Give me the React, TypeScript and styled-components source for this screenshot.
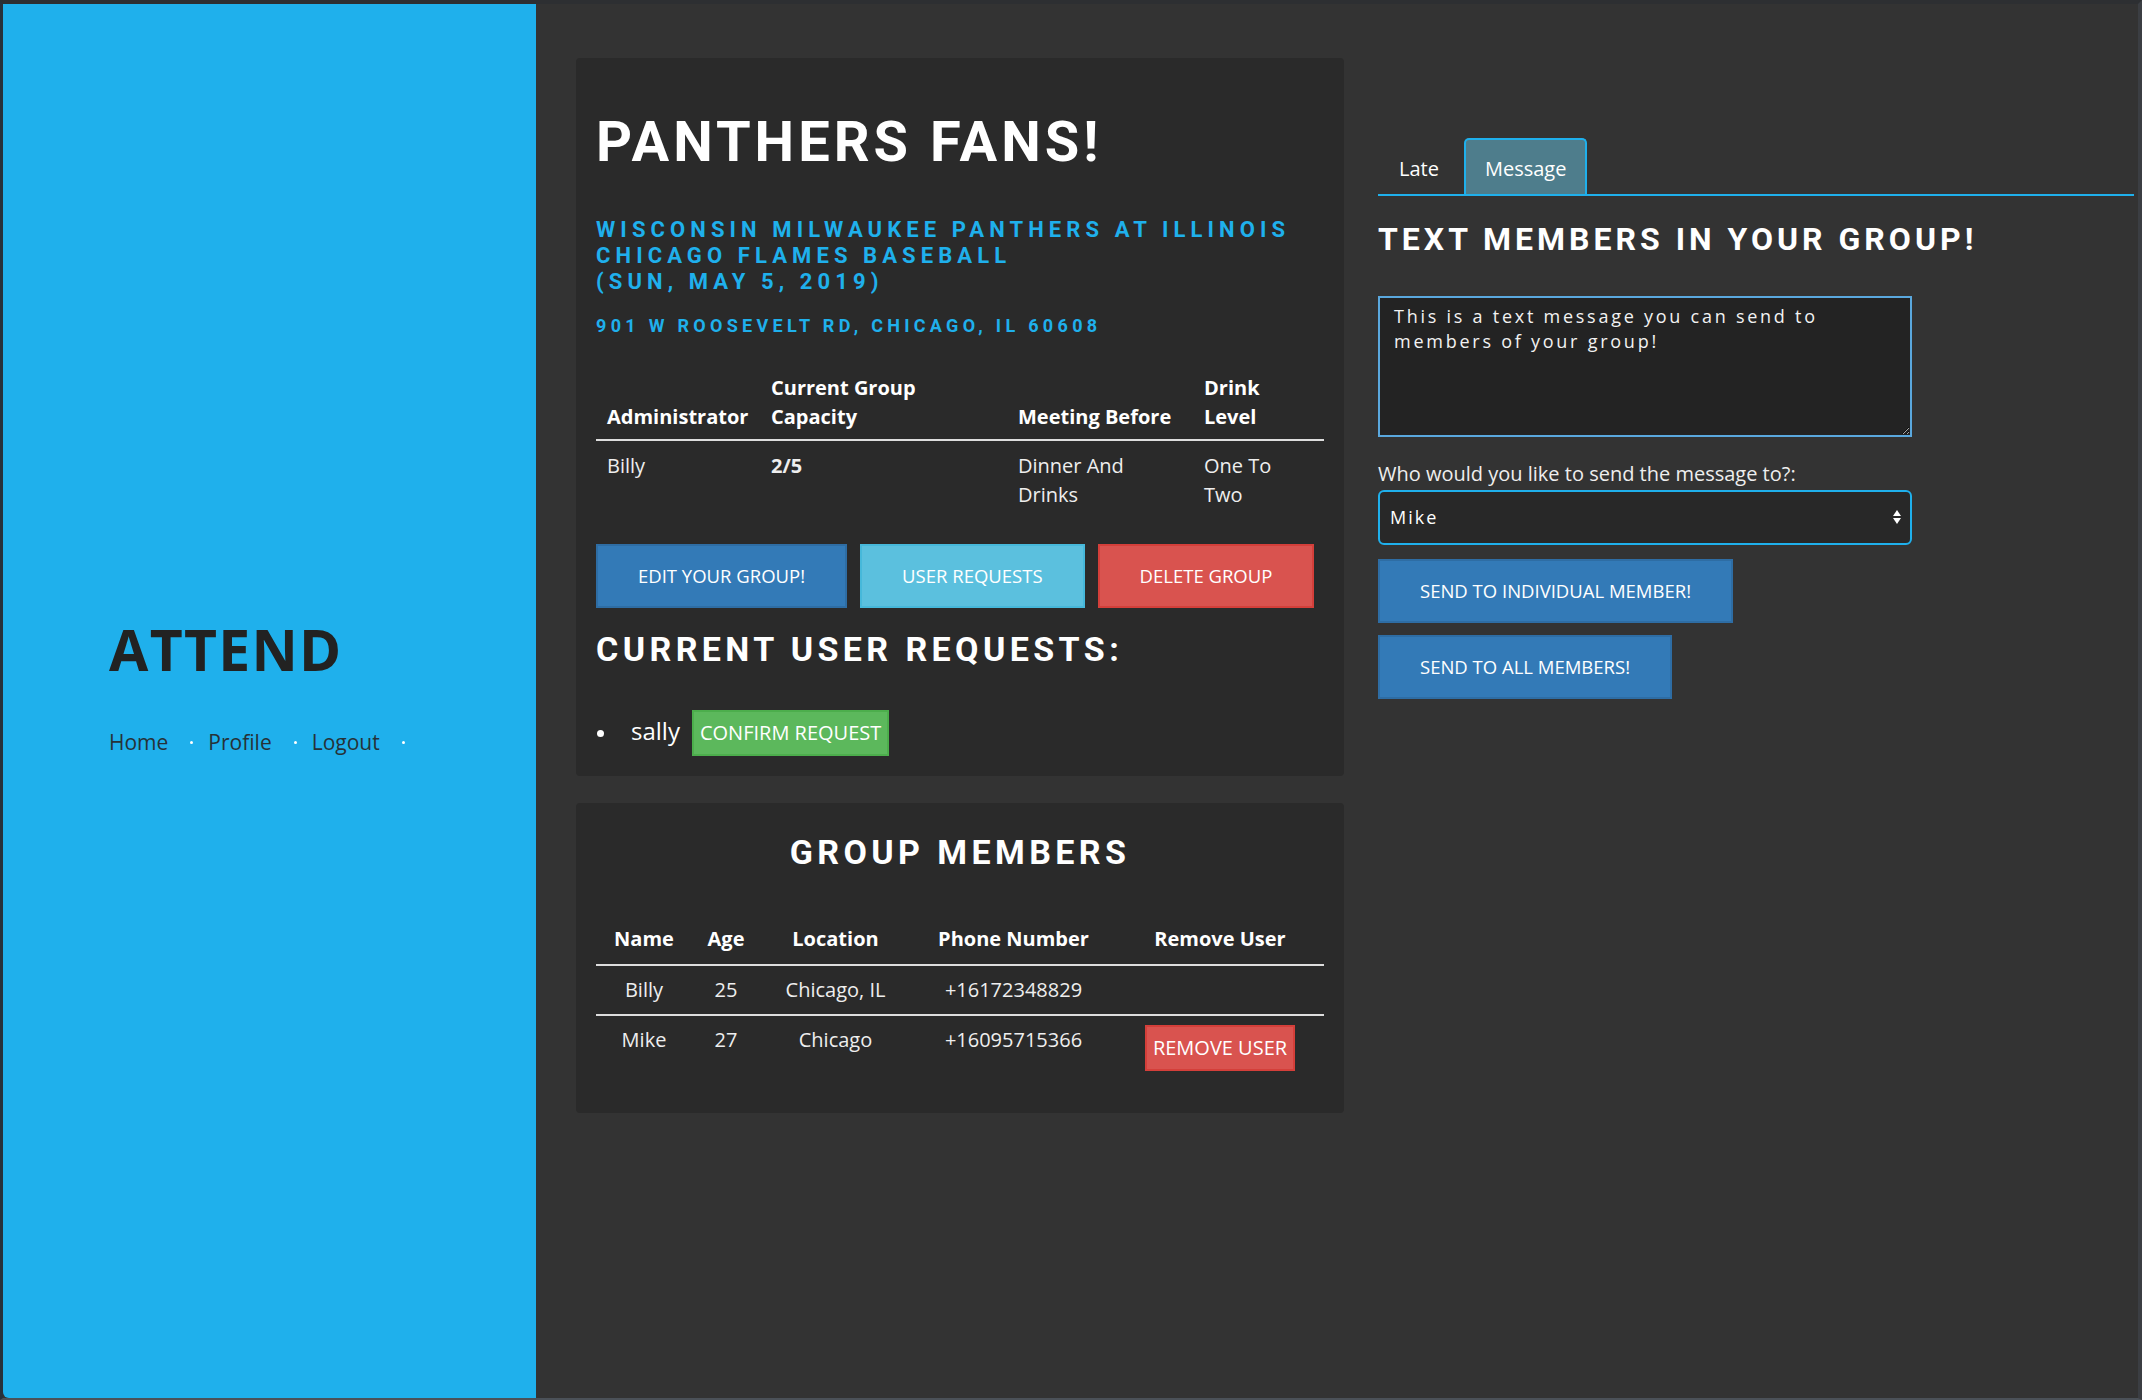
import React from "react";
import styled, { createGlobalStyle, css } from "styled-components";

const GlobalStyle = createGlobalStyle`
  html, body { margin: 0; padding: 0; background: #333333; }
  body { font-family: "Open Sans", "Liberation Sans", sans-serif; color: #eeeeee; }
  * { box-sizing: border-box; }
`;

const BLUE = "#1fb0ec";

const Frame = styled.div`
  display: flex;
  height: 1400px;
  border-top: 4px solid #2d2f32;
  border-left: 3px solid #27313b;
  border-right: 4px solid #3b3e43;
  border-bottom: 2px solid #4b5158;
  background: #333333;
`;

const Sidebar = styled.aside`
  flex: none;
  width: 533px;
  background: ${BLUE};
  border-bottom-left-radius: 6px;
  display: flex;
  flex-direction: column;
  justify-content: center;
  padding: 0 0 27px 106px;
`;

const Brand = styled.h1`
  margin: 0;
  font-family: "Open Sans", sans-serif;
  font-weight: 700;
  font-size: 57px;
  line-height: 1.1;
  letter-spacing: 1.3px;
  color: #222222;
`;

const NavList = styled.ul`
  display: flex;
  list-style: none;
  margin: 46px 0 0;
  padding: 0;
`;

const NavItem = styled.li`
  display: flex;
  align-items: center;
  font-size: 21px;
  line-height: 30px;
  &::after {
    content: "";
    width: 3px;
    height: 3px;
    border-radius: 50%;
    background: #ffffff;
    margin: 2px 15px 0 22px;
  }
`;

const NavLink = styled.a`
  color: #263238;
  text-decoration: none;
`;

const Main = styled.main`
  flex: 1;
  display: flex;
  align-items: flex-start;
  gap: 34px;
  padding: 54px 4px 0 40px;
`;

const LeftColumn = styled.div`
  flex: none;
  width: 768px;
  display: flex;
  flex-direction: column;
  gap: 27px;
`;

const Card = styled.section`
  background: #2a2a2a;
  border-radius: 4px;
  padding: 20px;
`;

const headingFont = css`
  font-family: Roboto, "Liberation Sans", sans-serif;
  font-weight: 700;
  text-transform: uppercase;
`;

const Title = styled.h1`
  ${headingFont};
  margin: 32px 0 0;
  font-size: 56px;
  line-height: 64px;
  letter-spacing: 4px;
  color: #ffffff;
`;

const EventName = styled.h3`
  ${headingFont};
  margin: 43px 0 0;
  font-size: 22px;
  line-height: 26px;
  letter-spacing: 5.1px;
  color: ${BLUE};
`;

const Address = styled.h4`
  ${headingFont};
  margin: 20px 0 0;
  font-size: 18px;
  line-height: 22px;
  letter-spacing: 4.3px;
  color: ${BLUE};
`;

const SectionTitle = styled.h2<{ $mt: number; $center?: boolean }>`
  ${headingFont};
  margin: ${(p) => p.$mt}px 0 0;
  font-size: 34px;
  line-height: 40px;
  letter-spacing: 4.4px;
  color: #ffffff;
  text-align: ${(p) => (p.$center ? "center" : "left")};
`;

const InfoTable = styled.table`
  width: 100%;
  margin-top: 29px;
  border-collapse: collapse;
  table-layout: fixed;
  font-size: 20px;
  line-height: 28.57px;

  th {
    text-align: left;
    vertical-align: bottom;
    font-weight: 700;
    color: #ffffff;
    padding: 8px;
    border-bottom: 2px solid #dddddd;
  }
  td {
    vertical-align: top;
    padding: 11px 8px 8px;
    color: #eeeeee;
  }
  th:nth-child(1), td:nth-child(1) { padding-left: 11px; }
  th:nth-child(2), td:nth-child(2) { padding-right: 30px; }
  th:nth-child(3), td:nth-child(3) { padding-right: 20px; }
  th:nth-child(4), td:nth-child(4) { padding-right: 30px; }
`;

const Strong = styled.strong`
  font-weight: 700;
`;

const ButtonRow = styled.div`
  display: flex;
  gap: 13px;
  margin-top: 27px;
`;

const variants = {
  primary: { bg: "#337ab7", border: "#2e6da4" },
  info: { bg: "#5bc0de", border: "#46b8da" },
  danger: { bg: "#d9534f", border: "#d43f3a" },
  success: { bg: "#5cb85c", border: "#4cae4c" },
};

type Variant = keyof typeof variants;

const Button = styled.button<{ $variant: Variant; $small?: boolean; $mt?: number }>`
  font-family: "Open Sans", sans-serif;
  color: #ffffff;
  background: ${(p) => variants[p.$variant].bg};
  border: 2px solid ${(p) => variants[p.$variant].border};
  border-radius: 0;
  margin-top: ${(p) => p.$mt ?? 0}px;
  cursor: pointer;
  white-space: nowrap;
  ${(p) =>
    p.$small
      ? css`
          font-size: 20px;
          line-height: 30px;
          padding: 6px;
        `
      : css`
          font-size: 18.5px;
          line-height: 26px;
          padding: 17px 40px;
        `}
`;

const RequestList = styled.ul`
  margin: 41px 0 0;
  padding: 0;
  list-style: none;
  font-size: 24px;
  color: #ffffff;
`;

const RequestItem = styled.li`
  &::before {
    content: "";
    display: inline-block;
    width: 7px;
    height: 7px;
    border-radius: 50%;
    background: #ffffff;
    margin: 0 27px 0 1px;
    vertical-align: middle;
  }
  & > button {
    vertical-align: middle;
  }
`;

const RequestName = styled.span`
  margin-right: 12px;
`;

const MembersTable = styled.table`
  width: 100%;
  margin: 43px 0 13px;
  border-collapse: collapse;
  table-layout: fixed;
  font-size: 20px;
  line-height: 30px;
  text-align: center;

  th {
    font-weight: 700;
    color: #ffffff;
    padding: 9px 8px 10px;
    border-bottom: 2px solid #dddddd;
  }
  td {
    color: #eeeeee;
    padding: 9px 8px;
    vertical-align: top;
  }
  tbody tr + tr td {
    border-top: 2px solid #dddddd;
  }
`;

const RightColumn = styled.div`
  flex: 1;
  display: flex;
  flex-direction: column;
  align-items: flex-start;
`;

const Tabs = styled.ul`
  align-self: stretch;
  display: flex;
  list-style: none;
  margin: 80px 0 0;
  padding: 0;
  border-bottom: 2px solid ${BLUE};
`;

const Tab = styled.li<{ $active?: boolean }>`
  font-size: 20px;
  line-height: 29px;
  padding: 14px 19px 11px;
  margin-right: 4px;
  border: 2px solid ${(p) => (p.$active ? BLUE : "transparent")};
  border-bottom: 0;
  border-radius: 5px 5px 0 0;
  background: ${(p) => (p.$active ? "#4e7d8c" : "transparent")};
  color: #ffffff;
  cursor: pointer;
`;

const PanelTitle = styled.h2`
  ${headingFont};
  margin: 24px 0 0;
  font-size: 32px;
  line-height: 38px;
  letter-spacing: 4px;
  color: #ffffff;
`;

const MessageBox = styled.textarea`
  margin-top: 38px;
  width: 534px;
  height: 141px;
  padding: 6px 14px;
  background: #232323;
  border: 2px solid #5aa8de;
  border-radius: 0;
  color: #f2f2f2;
  font-family: "Open Sans", sans-serif;
  font-size: 18px;
  line-height: 24.5px;
  letter-spacing: 2.75px;
  outline: none;
  resize: both;
`;

const FieldLabel = styled.label`
  display: block;
  margin-top: 23px;
  font-size: 20px;
  line-height: 28.57px;
  color: #eeeeee;
`;

const SelectWrap = styled.div`
  position: relative;
  margin-top: 1px;
  width: 534px;
`;

const MemberSelect = styled.select`
  display: block;
  width: 100%;
  height: 55px;
  appearance: none;
  -webkit-appearance: none;
  background: #282828;
  border: 2px solid ${BLUE};
  border-radius: 6px;
  padding: 0 30px 0 10px;
  color: #ffffff;
  font-family: "Open Sans", sans-serif;
  font-size: 18px;
  letter-spacing: 2px;
  outline: none;
`;

const SelectArrows = styled.svg`
  position: absolute;
  right: 10px;
  top: 50%;
  transform: translateY(-50%);
  pointer-events: none;
`;

export default function App() {
  return (
    <>
      <GlobalStyle />
      <Frame>
        <Sidebar>
          <Brand>ATTEND</Brand>
          <NavList>
            <NavItem>
              <NavLink href="#">Home</NavLink>
            </NavItem>
            <NavItem>
              <NavLink href="#">Profile</NavLink>
            </NavItem>
            <NavItem>
              <NavLink href="#">Logout</NavLink>
            </NavItem>
          </NavList>
        </Sidebar>

        <Main>
          <LeftColumn>
            <Card>
              <Title>PANTHERS FANS!</Title>
              <EventName>
                WISCONSIN MILWAUKEE PANTHERS AT ILLINOIS
                <br />
                CHICAGO FLAMES BASEBALL
                <br />
                (SUN, MAY 5, 2019)
              </EventName>
              <Address>901 W ROOSEVELT RD, CHICAGO, IL 60608</Address>
              <InfoTable>
                <colgroup>
                  <col style={{ width: 167 }} />
                  <col style={{ width: 247 }} />
                  <col style={{ width: 186 }} />
                  <col style={{ width: 128 }} />
                </colgroup>
                <thead>
                  <tr>
                    <th>Administrator</th>
                    <th>Current Group Capacity</th>
                    <th>Meeting Before</th>
                    <th>Drink Level</th>
                  </tr>
                </thead>
                <tbody>
                  <tr>
                    <td>Billy</td>
                    <td>
                      <Strong>2/5</Strong>
                    </td>
                    <td>Dinner And Drinks</td>
                    <td>One To Two</td>
                  </tr>
                </tbody>
              </InfoTable>
              <ButtonRow>
                <Button $variant="primary">EDIT YOUR GROUP!</Button>
                <Button $variant="info">USER REQUESTS</Button>
                <Button $variant="danger">DELETE GROUP</Button>
              </ButtonRow>
              <SectionTitle $mt={21}>CURRENT USER REQUESTS:</SectionTitle>
              <RequestList>
                <RequestItem>
                  <RequestName>sally</RequestName>
                  <Button $variant="success" $small>
                    CONFIRM REQUEST
                  </Button>
                </RequestItem>
              </RequestList>
            </Card>

            <Card>
              <SectionTitle $mt={9} $center>
                GROUP MEMBERS
              </SectionTitle>
              <MembersTable>
                <colgroup>
                  <col style={{ width: 96 }} />
                  <col style={{ width: 68 }} />
                  <col style={{ width: 151 }} />
                  <col style={{ width: 205 }} />
                  <col style={{ width: 208 }} />
                </colgroup>
                <thead>
                  <tr>
                    <th>Name</th>
                    <th>Age</th>
                    <th>Location</th>
                    <th>Phone Number</th>
                    <th>Remove User</th>
                  </tr>
                </thead>
                <tbody>
                  <tr>
                    <td>Billy</td>
                    <td>25</td>
                    <td>Chicago, IL</td>
                    <td>+16172348829</td>
                    <td></td>
                  </tr>
                  <tr>
                    <td>Mike</td>
                    <td>27</td>
                    <td>Chicago</td>
                    <td>+16095715366</td>
                    <td>
                      <Button $variant="danger" $small>
                        REMOVE USER
                      </Button>
                    </td>
                  </tr>
                </tbody>
              </MembersTable>
            </Card>
          </LeftColumn>

          <RightColumn>
            <Tabs>
              <Tab>Late</Tab>
              <Tab $active>Message</Tab>
            </Tabs>
            <PanelTitle>TEXT MEMBERS IN YOUR GROUP!</PanelTitle>
            <MessageBox defaultValue="This is a text message you can send to members of your group!" />
            <FieldLabel>Who would you like to send the message to?:</FieldLabel>
            <SelectWrap>
              <MemberSelect defaultValue="Mike">
                <option value="Mike">Mike</option>
                <option value="Billy">Billy</option>
              </MemberSelect>
              <SelectArrows width="10" height="16" viewBox="0 0 10 16">
                <path d="M5 1 L9 7 L1 7 Z" fill="#ffffff" />
                <path d="M1 9 L9 9 L5 15 Z" fill="#ffffff" />
              </SelectArrows>
            </SelectWrap>
            <Button $variant="primary" $mt={14}>
              SEND TO INDIVIDUAL MEMBER!
            </Button>
            <Button $variant="primary" $mt={12}>
              SEND TO ALL MEMBERS!
            </Button>
          </RightColumn>
        </Main>
      </Frame>
    </>
  );
}
